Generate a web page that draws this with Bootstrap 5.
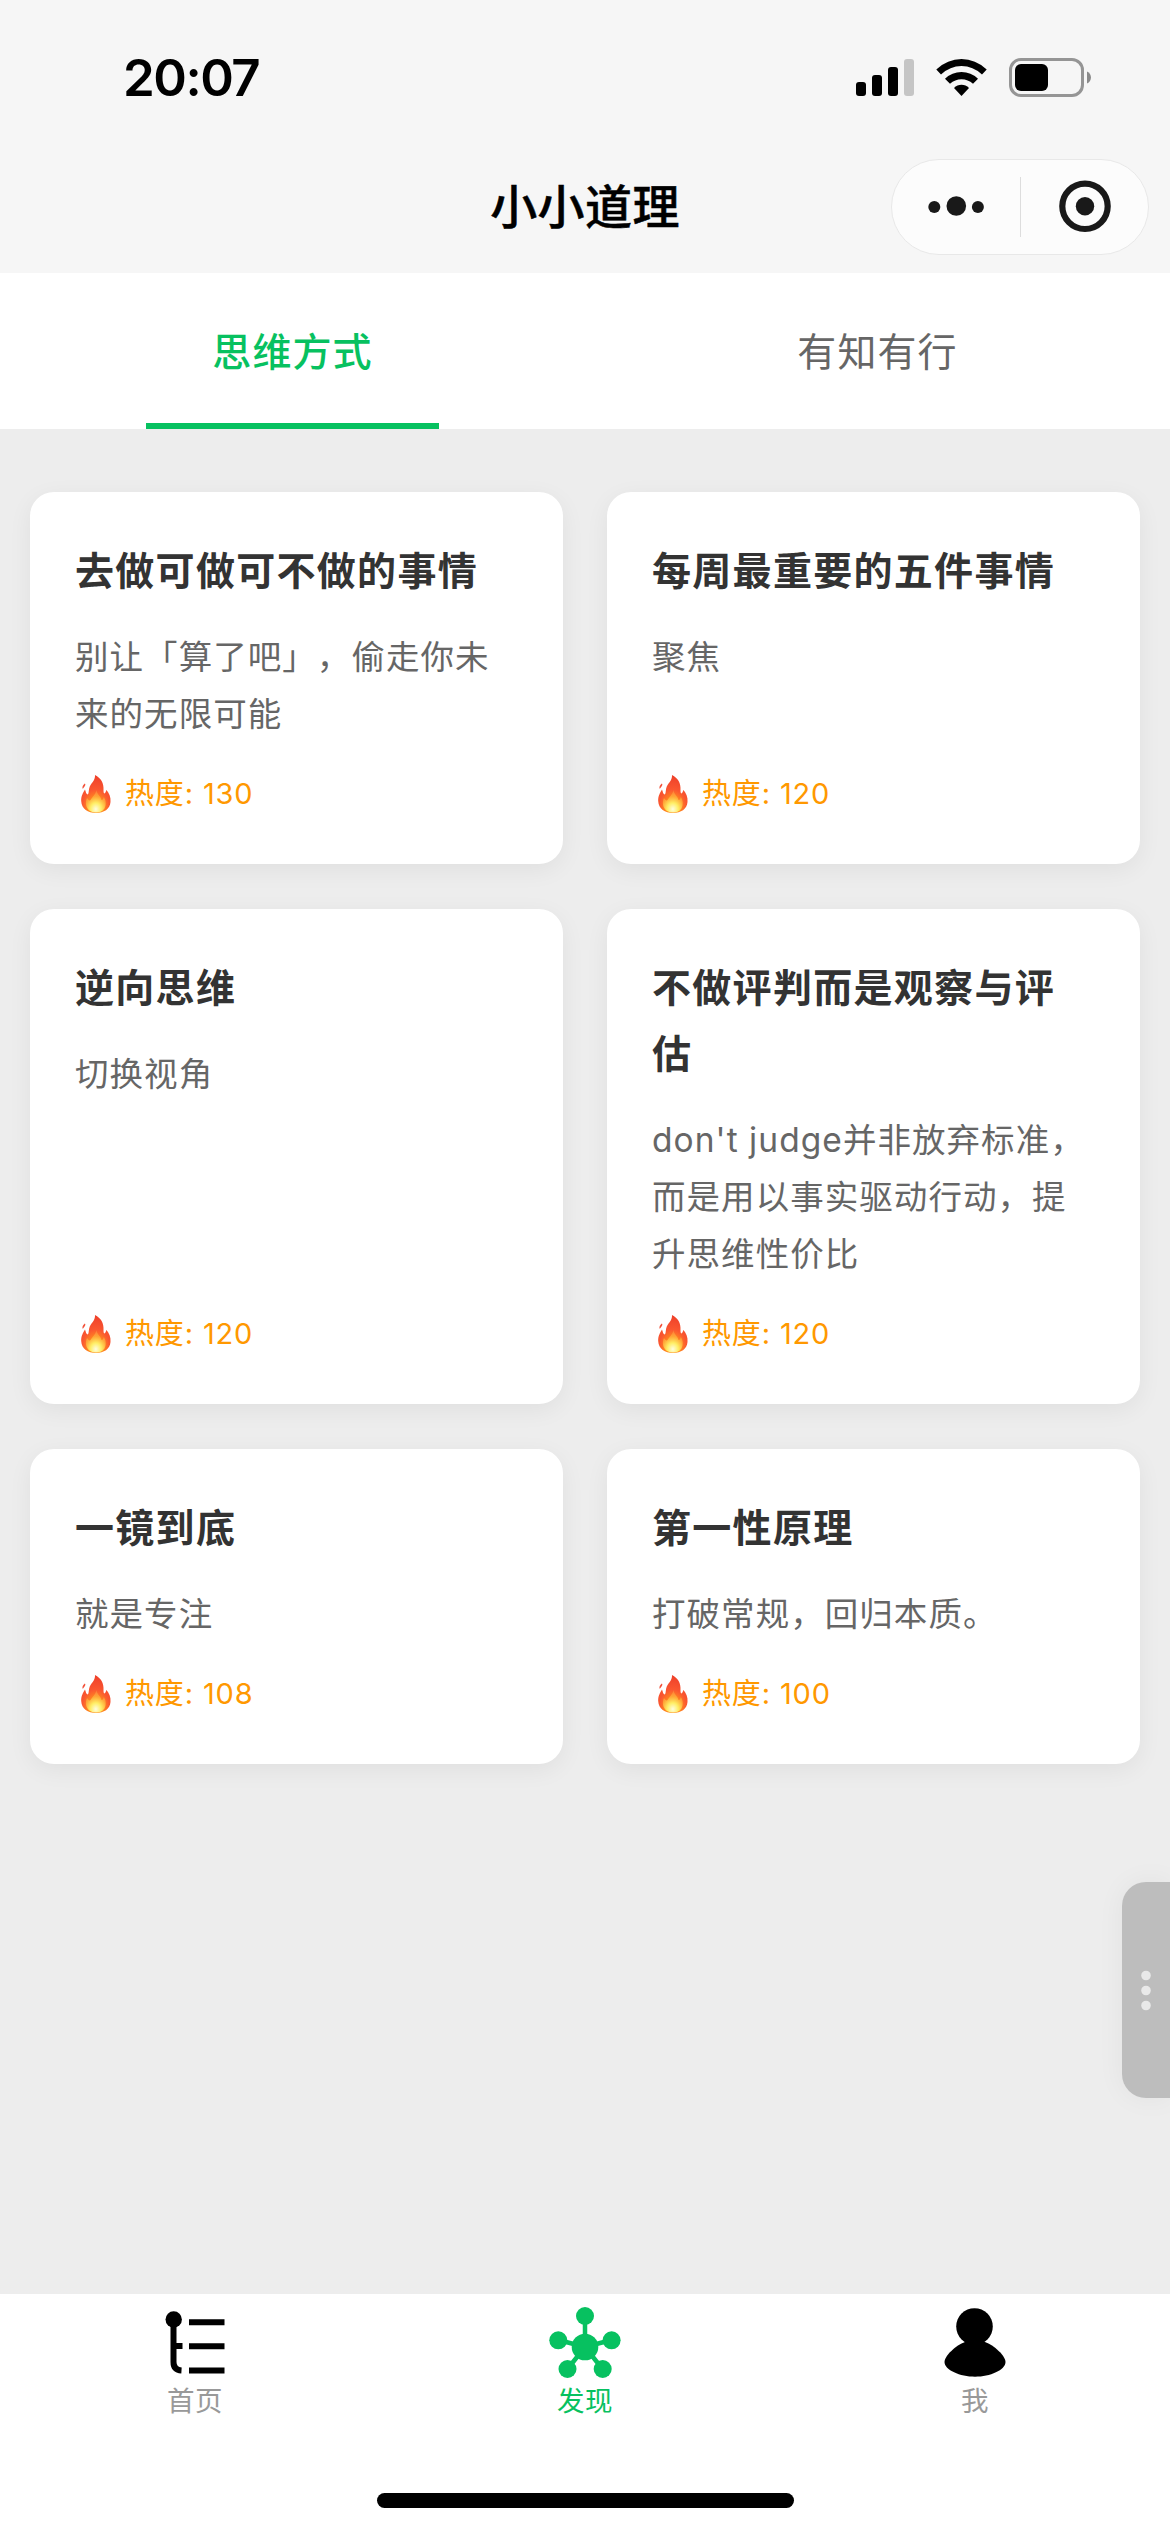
<!DOCTYPE html>
<html lang="zh-CN">
<head>
<meta charset="utf-8">
<meta name="viewport" content="width=device-width, initial-scale=1">
<title>小小道理</title>
<link href="https://cdn.jsdelivr.net/npm/bootstrap@5.3.0/dist/css/bootstrap.min.css" rel="stylesheet">
<style>
  body { font-family: Inter, "Noto Sans CJK SC", sans-serif; background: #ededed; color: #000; overflow: hidden; text-spacing-trim: space-all; }
  svg { display: block; flex: none; }
  .topbar { background: #f6f6f6; height: 273px; }
  .statusbar { height: 141px; padding: 14px 78px 0 123px; }
  .clock { font-size: 51px; font-weight: 600; line-height: 1; letter-spacing: -1.5px; }
  .titlebar { height: 132px; }
  .app-title { font-size: 47px; font-weight: 500; line-height: 66px; letter-spacing: .4px; -webkit-text-stroke: .5px #000; }
  .capsule { right: 21px; top: 18px; width: 258px; height: 96px; border: 1px solid #e8e8e8; border-radius: 48px; background: #fcfcfc; }
  .tabs-row { height: 156px; }
  .tab-item { font-size: 39px; letter-spacing: 1.1px; color: #666; border: 0; background: none; padding-top: 3px; }
  .tab-item.active { color: #07c160; font-weight: 500; }
  .tab-item.active::after { content: ""; position: absolute; left: 25%; right: 25%; bottom: 0; height: 6px; background: #07c160; }
  .grid-area { padding: 63px 30px 0; }
  .tiles { display: grid; grid-template-columns: 533px 533px; gap: 45px 44px; }
  .tile { border: 0; border-radius: 24px; padding: 46px 45px 45px; box-shadow: 0 6px 24px rgba(0,0,0,.06); }
  .tile-title { font-size: 39px; font-weight: 700; line-height: 66px; letter-spacing: 1.3px; color: #333; margin: 0 0 25px; padding-right: 4px; }
  .tile-text { font-size: 33.5px; line-height: 57px; letter-spacing: 1.05px; color: #666; margin: 0 0 27px; font-kerning: none; font-feature-settings: "chws" 0, "halt" 0, "palt" 0; }
  .heat { font-size: 29px; line-height: 48px; color: #ff9800; letter-spacing: .85px; padding-left: 6px; gap: 14px; height: 48px; margin-bottom: 1px; }
  .drawer { right: 0; top: 1882px; width: 48px; height: 216px; border-radius: 24px 0 0 24px; background: #bdbdbd; box-shadow: 0 0 28px rgba(0,0,0,.05); }
  .tabbar { height: 238px; }
  .tabbar-item { font-size: 27.5px; line-height: 36px; letter-spacing: .5px; color: #999; padding-top: 9px; }
  .tabbar-item.active { color: #07c160; }
  .home-line { left: 377px; bottom: 24px; width: 417px; height: 15px; border-radius: 8px; background: #000; }
</style>
<script src="https://cdn.jsdelivr.net/npm/bootstrap@5.3.0/dist/js/bootstrap.bundle.min.js"></script>
</head>
<body>
<svg width="0" height="0" class="position-absolute">
  <defs>
    <radialGradient id="flameOuter" cx=".5" cy=".85" r=".85">
      <stop offset="0" stop-color="#ffb02e"/><stop offset=".32" stop-color="#ff8420"/><stop offset=".55" stop-color="#fa5730"/><stop offset="1" stop-color="#ee3f2a"/>
    </radialGradient>
    <radialGradient id="flameInner" cx=".5" cy=".85" r=".8">
      <stop offset="0" stop-color="#fffde0"/><stop offset=".35" stop-color="#ffee65"/><stop offset=".7" stop-color="#ffb03c" stop-opacity=".8"/><stop offset="1" stop-color="#ff9a48" stop-opacity=".5"/>
    </radialGradient>
    <symbol id="flame" viewBox="0 0 30 38">
      <path fill="url(#flameOuter)" d="M14 0C20 3 23 8 22.500 15C22.500 18 23 19 24 18C25 17 25 15.500 25.500 15C28 18 30 22 29.500 27C29 34 23 38 15 38C7 38 .5 34 .2 26C0 21 2 18 4 14.500C5 17 5 19 6.500 19.500C8 19 7.500 16 8.300 13C9.500 8 14.500 6 14 0Z"/>
      <path fill="#f2513a" d="M3.800 8.500C5.500 10 3 12 1.800 14C.8 12 2 10 3.800 8.500Z"/>
      <path fill="url(#flameInner)" d="M15.500 15C16 20 20 21 20.500 25C22 25 22.500 23 22.800 22C25 25 25.500 30 23.500 33.500C21.500 36.500 18 37.500 15 37.500C10 37.500 5.500 34.500 5 29.500C4.800 27 5 25 6 23C7.500 25 8.500 26 9.500 25C11 22 14.500 20 15.500 15Z"/>
    </symbol>
  </defs>
</svg>
<div class="d-flex flex-column vh-100">
  <header class="topbar">
    <div class="statusbar d-flex align-items-center justify-content-between">
      <div class="clock">20:07</div>
      <svg width="236" height="42" viewBox="856 57 236 42">
        <rect x="856" y="82" width="10" height="14" rx="3"/><rect x="872" y="75" width="10" height="21" rx="3"/><rect x="888" y="67" width="10" height="29" rx="3"/><rect x="904" y="59" width="10" height="37" rx="3" fill="#c5c5c5"/>
        <path d="M936.300 69.500Q947.500 59 961.500 59T986.700 69.500L982 74.500Q973 66 961.500 66T941 74.500Z"/>
        <path d="M945 78.700Q952 72 961.500 72T978 78.700L973 83.800Q968 79.200 961.500 79.200T950 83.800Z"/>
        <path d="M954 88Q957.200 84.700 961.500 84.700T969 88L961.500 96Z"/>
        <rect x="1010.500" y="59.500" width="72" height="36" rx="10.500" fill="none" stroke="#959595" stroke-width="3"/>
        <rect x="1015" y="64" width="33" height="27" rx="6"/>
        <path fill="#8a8a8a" d="M1087 71.500C1092.300 73.500 1092.300 81.500 1087 83.500Z"/>
      </svg>
    </div>
    <div class="titlebar d-flex align-items-center justify-content-center position-relative">
      <h1 class="app-title m-0">小小道理</h1>
      <div class="capsule position-absolute">
        <svg width="256" height="94" viewBox="892 160 256 94" fill="#191919">
          <circle cx="934.300" cy="207" r="6"/><circle cx="956.300" cy="206" r="9.800"/><circle cx="977.900" cy="207" r="6"/>
          <path stroke="#ddd" d="M1020.500 177V237"/>
          <circle cx="1085" cy="206.300" r="22.700" fill="none" stroke="#191919" stroke-width="6.200"/><circle cx="1085" cy="206.300" r="9.200"/>
        </svg>
      </div>
    </div>
  </header>
  <nav class="tabs-row d-flex bg-white">
    <button class="tab-item active flex-fill w-50 position-relative">思维方式</button>
    <button class="tab-item flex-fill w-50 position-relative">有知有行</button>
  </nav>
  <main class="grid-area flex-grow-1">
    <div class="tiles">
      <article class="card tile"><h2 class="tile-title">去做可做可不做的事情</h2><p class="tile-text">别让「算了吧」，偷走你未来的无限可能</p><div class="heat d-flex align-items-center mt-auto"><svg width="30" height="38"><use href="#flame"/></svg><span>热度: 130</span></div></article>
      <article class="card tile"><h2 class="tile-title">每周最重要的五件事情</h2><p class="tile-text">聚焦</p><div class="heat d-flex align-items-center mt-auto"><svg width="30" height="38"><use href="#flame"/></svg><span>热度: 120</span></div></article>
      <article class="card tile"><h2 class="tile-title">逆向思维</h2><p class="tile-text">切换视角</p><div class="heat d-flex align-items-center mt-auto"><svg width="30" height="38"><use href="#flame"/></svg><span>热度: 120</span></div></article>
      <article class="card tile"><h2 class="tile-title">不做评判而是观察与评估</h2><p class="tile-text">don't judge并非放弃标准，而是用以事实驱动行动，提升思维性价比</p><div class="heat d-flex align-items-center mt-auto"><svg width="30" height="38"><use href="#flame"/></svg><span>热度: 120</span></div></article>
      <article class="card tile"><h2 class="tile-title">一镜到底</h2><p class="tile-text">就是专注</p><div class="heat d-flex align-items-center mt-auto"><svg width="30" height="38"><use href="#flame"/></svg><span>热度: 108</span></div></article>
      <article class="card tile"><h2 class="tile-title">第一性原理</h2><p class="tile-text">打破常规，回归本质。</p><div class="heat d-flex align-items-center mt-auto"><svg width="30" height="38"><use href="#flame"/></svg><span>热度: 100</span></div></article>
    </div>
  </main>
  <footer class="tabbar bg-white d-flex position-relative">
    <div class="tabbar-item w-100 d-flex flex-column align-items-center">
      <svg width="80" height="80" viewBox="155 2303 80 80">
        <circle cx="173.700" cy="2319.500" r="8.200"/>
        <path fill="none" stroke="#000" stroke-width="6" d="M173.500 2320V2362Q173.500 2370 181.500 2370.500M173.500 2346H182.500M189 2322.300H224.500M189 2346.300H224.500M189 2370.500H224.500"/>
      </svg>
      <span>首页</span>
    </div>
    <div class="tabbar-item active w-100 d-flex flex-column align-items-center">
      <svg width="80" height="80" viewBox="545 2303 80 80" fill="#07c160">
        <path stroke="#07c160" stroke-width="4.500" d="M585 2347V2316M585 2347L558.500 2340M585 2347L611.500 2340M585 2347L567.500 2369M585 2347L602.500 2369"/>
        <circle cx="585" cy="2347" r="13.300"/><circle cx="585" cy="2316" r="9"/><circle cx="558.300" cy="2340.300" r="9"/><circle cx="611.600" cy="2340.300" r="9"/><circle cx="567.500" cy="2369" r="9"/><circle cx="602.700" cy="2369" r="9"/>
      </svg>
      <span>发现</span>
    </div>
    <div class="tabbar-item w-100 d-flex flex-column align-items-center">
      <svg width="80" height="80" viewBox="935 2303 80 80">
        <circle cx="974.500" cy="2326.500" r="18.300"/>
        <path d="M965 2342C956 2345 944.500 2356 944.500 2362C944.500 2370 960 2376.700 975 2376.700S1005.500 2370 1005.500 2362C1005.500 2356 994 2345 985 2342Z"/>
      </svg>
      <span>我</span>
    </div>
    <div class="home-line position-absolute"></div>
  </footer>
</div>
<aside class="drawer position-absolute">
  <svg width="48" height="216" fill="#e9e9e9"><circle cx="24" cy="93.500" r="4.800"/><circle cx="24" cy="108.500" r="4.800"/><circle cx="24" cy="123.500" r="4.800"/></svg>
</aside>
</body>
</html>
